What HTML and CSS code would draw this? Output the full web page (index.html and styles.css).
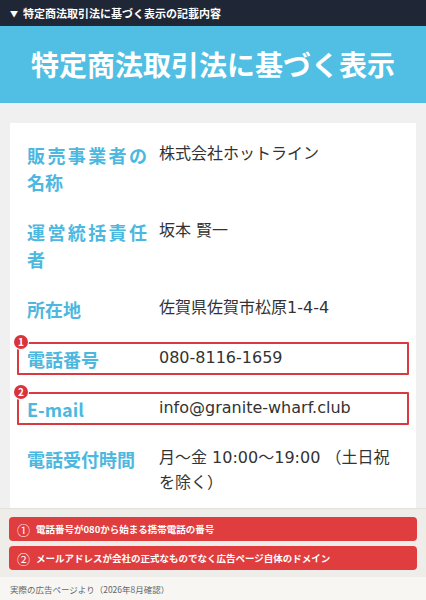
FILE: index.html
```html
<!DOCTYPE html>
<html lang="ja">
<head>
<meta charset="utf-8">
<link rel="stylesheet" href="styles.css">
</head>
<body>
<div class="topbar"><span class="tri">▼</span>特定商法取引法に基づく表示の記載内容</div>
<div class="banner"><h1 class="title">特定商法取引法に基づく表示</h1></div>
<main class="main">
  <section class="card">
    <div class="row"><div class="label">販売事業者の名称</div><div class="value">株式会社ホットライン</div></div>
    <div class="row"><div class="label">運営統括責任者</div><div class="value">坂本 賢一</div></div>
    <div class="row"><div class="label">所在地</div><div class="value">佐賀県佐賀市松原1-4-4</div></div>
    <div class="row mark"><span class="badge">1</span><div class="label">電話番号</div><div class="value">080-8116-1659</div></div>
    <div class="row mark"><span class="badge">2</span><div class="label">E-mail</div><div class="value">info@granite-wharf.club</div></div>
    <div class="row"><div class="label">電話受付時間</div><div class="value">月～金 10:00～19:00 （土日祝を除く）</div></div>
  </section>
</main>
<div class="notes">
  <div class="note"><span class="num">①</span>電話番号が080から始まる携帯電話の番号</div>
  <div class="note"><span class="num">②</span>メールアドレスが会社の正式なものでなく広告ページ自体のドメイン</div>
</div>
<footer class="foot">実際の広告ページより（2026年8月確認）</footer>
</body>
</html>
```
FILE: styles.css
```css
* { box-sizing: border-box; }
html, body { margin: 0; padding: 0; }
body {
  width: 426px;
  height: 600px;
  overflow: hidden;
  font-family: "Noto Sans CJK JP", "Noto Sans", sans-serif;
  background: #f7f6f3;
}
.topbar {
  height: 26px;
  background: #1f2736;
  color: #fff;
  font-size: 11px;
  font-weight: 700;
  display: flex;
  align-items: center;
  padding-left: 10px;
}
.tri { font-size: 8px; margin-right: 5px; }
.banner {
  height: 77px;
  background: #50bfe3;
  display: flex;
  align-items: center;
  justify-content: center;
}
.title {
  margin: 0;
  color: #fff;
  font-size: 28px;
  font-weight: 700;
  line-height: 1;
  padding-bottom: 2px;
}
.main {
  background: #f0f0f0;
  padding: 20px 10px 0;
  height: 405px;
}
.card {
  background: #fff;
  height: 385px;
  padding: 7px 7px 0;
}
.row {
  position: relative;
  display: grid;
  grid-template-columns: 120px 1fr;
  column-gap: 12px;
  padding: 11.5px 10px;
}
.label {
  color: #4cb8df;
  font-size: 18px;
  font-weight: 700;
  line-height: 27px;
  text-align: justify;
}
.value {
  color: #333;
  font-family: "DejaVu Sans", "Noto Sans CJK JP", sans-serif;
  font-size: 16px;
  line-height: 25px;
  margin-top: -1px;
}
.mark::after {
  content: "";
  position: absolute;
  left: 0;
  right: 0;
  top: 8px;
  bottom: 9px;
  border: 2px solid #d93a40;
  border-radius: 1px;
}
.badge {
  position: absolute;
  left: -3px;
  top: 1px;
  width: 14px;
  height: 14px;
  border-radius: 50%;
  background: #d9343b;
  box-shadow: 0 0 0 1px #fff;
  color: #fff;
  font-size: 10px;
  font-weight: 700;
  line-height: 14px;
  text-align: center;
  z-index: 1;
}
.notes {
  background: #eeede9;
  border-top: 1px solid #e2e1dc;
  padding: 8px 9px 7px 9px;
  display: flex;
  flex-direction: column;
  gap: 5px;
}
.note {
  height: 24px;
  background: #e03d3f;
  border-radius: 4px;
  color: #fff;
  font-size: 9.5px;
  font-weight: 700;
  display: flex;
  align-items: center;
  padding-left: 8px;
}
.num { font-size: 13px; font-weight: 400; margin-right: 6px; }
.foot {
  padding: 6px 10px;
  font-size: 8.5px;
  color: #666;
}
```
